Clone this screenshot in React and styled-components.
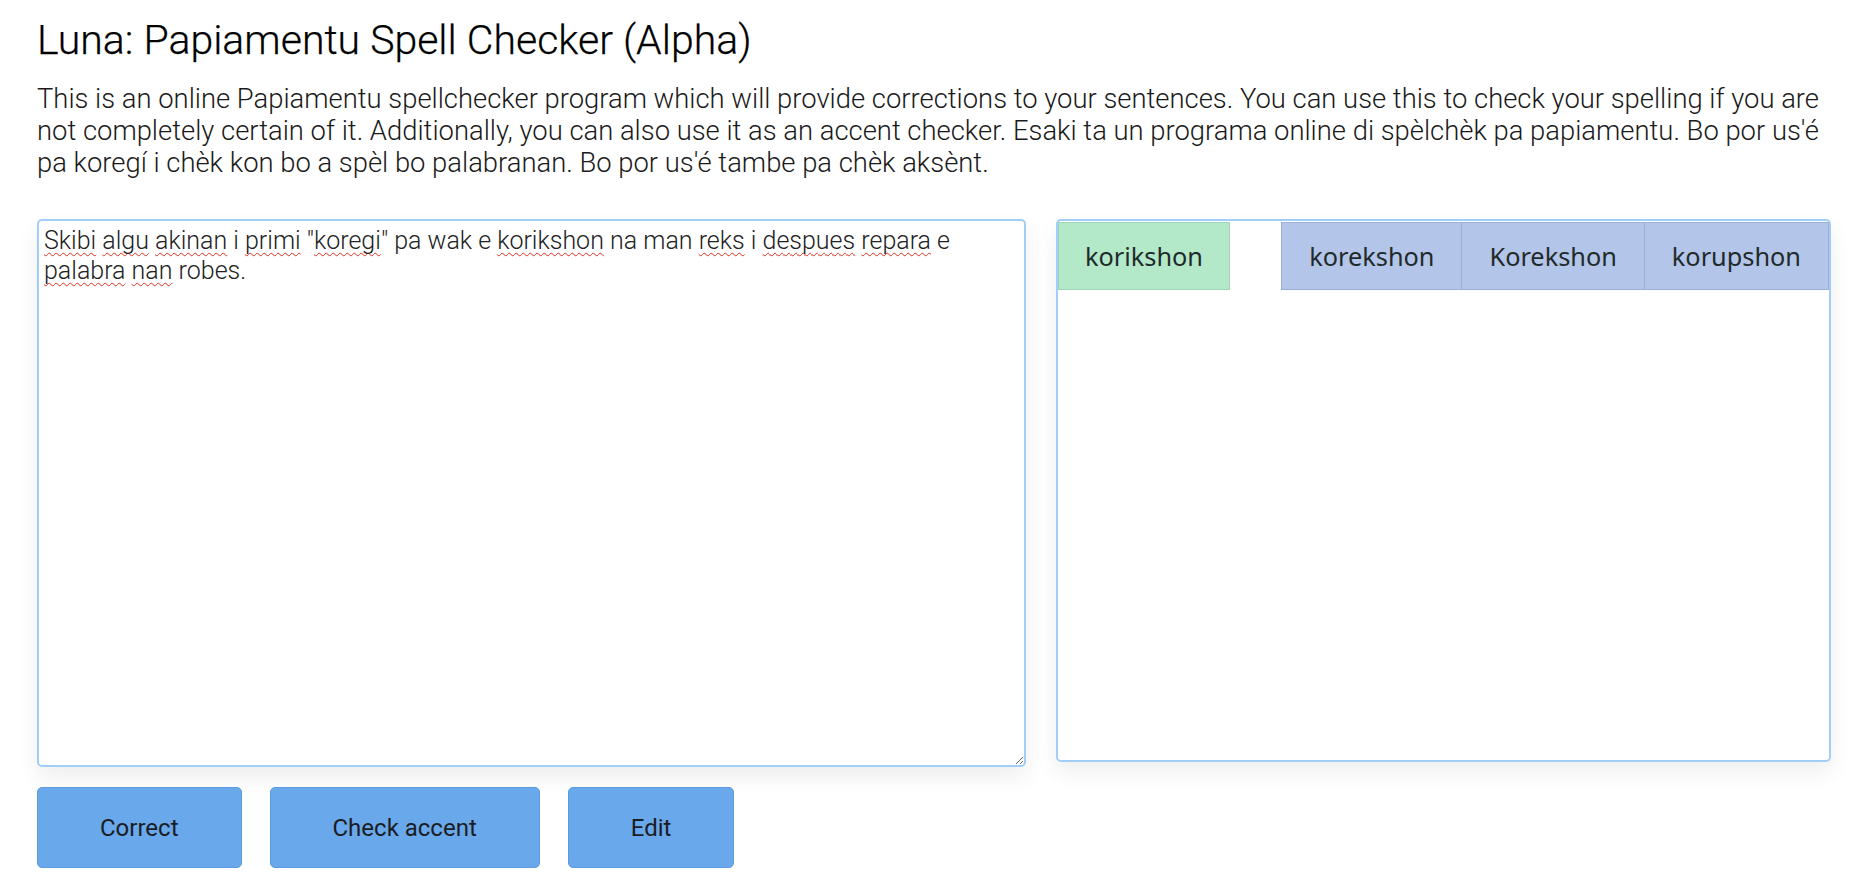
import styled, { createGlobalStyle } from 'styled-components';

const GlobalStyle = createGlobalStyle`
	html, body {
		margin: 0;
		padding: 0;
		background: #ffffff;
	}
	body {
		font-family: Roboto, "Noto Sans", Arial, sans-serif;
		color: #212529;
	}
`;

const Page = styled.div`
	padding: 15px 40px 24px 37px;
`;

const Title = styled.h1`
	margin: 0 0 17px;
	font-size: 41px;
	font-weight: 300;
	line-height: 51px;
	color: #000;
	-webkit-text-stroke: 0.25px #000;
`;

const Intro = styled.p`
	margin: 0 0 40px;
	font-size: 27.4px;
	font-weight: 300;
	line-height: 32px;
	color: #1a1a1a;
`;

const Workspace = styled.div`
	display: grid;
	grid-template-columns: 989px 775px;
	column-gap: 30px;
	align-items: start;
`;

const Framed = styled.div`
	box-sizing: border-box;
	border: 2px solid #a0cef8;
	border-radius: 5px;
	background: #fff;
	box-shadow: 0 10px 22px rgba(0, 0, 0, 0.07);
`;

const Editor = styled(Framed)`
	height: 548px;
	padding: 5px 5px;
	overflow: auto;
	resize: both;
	font-size: 25px;
	font-weight: 300;
	line-height: 30px;
	color: #222;
	outline: none;
`;

const Misspelled = styled.span`
	text-decoration: underline wavy #e0301e;
	text-decoration-thickness: 1px;
	text-underline-offset: 3px;
	text-decoration-skip-ink: none;
`;

const Suggestions = styled(Framed)`
	height: 543px;
	padding-top: 1px;
	display: flex;
	justify-content: space-between;
	align-items: flex-start;
`;

const Chip = styled.button`
	box-sizing: border-box;
	height: 68px;
	padding: 0 ${({ $variant }) => ($variant === 'original' ? '26px' : '27px')};
	margin: 0;
	font-family: "Noto Sans", "Open Sans", sans-serif;
	font-size: 25.3px;
	color: #1f2a2a;
	border: 1px solid ${({ $variant }) => ($variant === 'original' ? '#9fd4b5' : '#9caed6')};
	background: ${({ $variant }) => ($variant === 'original' ? '#b3e9c9' : '#b3c5e8')};
	cursor: pointer;

	& + & {
		border-left: none;
	}
`;

const ChipGroup = styled.div`
	display: flex;
`;

const Actions = styled.div`
	display: flex;
	gap: 28px;
	margin-top: 20px;
`;

const ActionButton = styled.button`
	box-sizing: border-box;
	height: 81px;
	padding: 0 62px;
	font-family: Roboto, Arial, sans-serif;
	font-size: 24px;
	font-weight: 400;
	color: #1a1d24;
	background: #6aa8ec;
	border: 1px solid #5d9be0;
	border-radius: 5px;
	cursor: pointer;
`;

const words = [
	['Skibi', true], [' '], ['algu', true], [' '], ['akinan', true], [' i '],
	['primi', true], [' "'], ['koregi', true], ['" pa wak e '], ['korikshon', true],
	[' na man '], ['reks', true], [' i '], ['despues', true], [' '], ['repara', true],
	[' e '], ['palabra', true], [' '], ['nan', true], [' robes.'],
];

const suggestions = ['korekshon', 'Korekshon', 'korupshon'];

export default function App() {
	return (
		<Page>
			<GlobalStyle />
			<Title>Luna: Papiamentu Spell Checker (Alpha)</Title>
			<Intro>
				This is an online Papiamentu spellchecker program which will provide corrections to your
				sentences. You can use this to check your spelling if you are not completely certain of it.
				Additionally, you can also use it as an accent checker. Esaki ta un programa online di
				spèlchèk pa papiamentu. Bo por us'é pa koregí i chèk kon bo a spèl bo palabranan. Bo por
				us'é tambe pa chèk aksènt.
			</Intro>
			<Workspace>
				<div>
					<Editor contentEditable suppressContentEditableWarning spellCheck={false}>
						{words.map(([text, wrong], i) =>
							wrong ? <Misspelled key={i}>{text}</Misspelled> : <span key={i}>{text}</span>
						)}
					</Editor>
					<Actions>
						<ActionButton>Correct</ActionButton>
						<ActionButton>Check accent</ActionButton>
						<ActionButton>Edit</ActionButton>
					</Actions>
				</div>
				<Suggestions>
					<Chip $variant="original">korikshon</Chip>
					<ChipGroup>
						{suggestions.map((word) => (
							<Chip key={word}>{word}</Chip>
						))}
					</ChipGroup>
				</Suggestions>
			</Workspace>
		</Page>
	);
}
